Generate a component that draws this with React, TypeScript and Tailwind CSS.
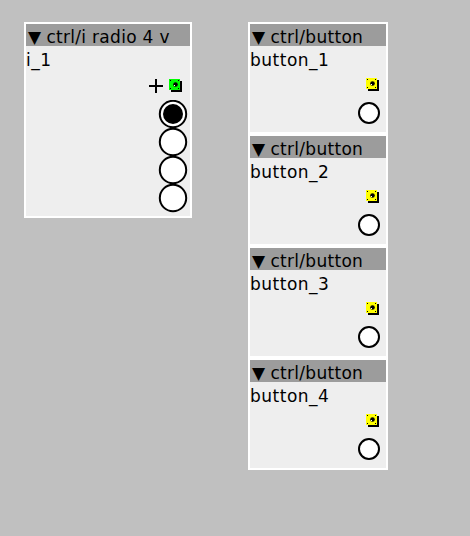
import React from "react";

const font = { fontFamily: '"DejaVu Sans", "Liberation Sans", sans-serif' };

const Inlet = ({ color }: { color: string }) => (
  <svg width="13" height="13" viewBox="0 0 13 13" className="block">
    <rect x="2" y="2" width="11" height="11" fill="#000" />
    <rect x="0" y="0" width="11" height="11" fill={color} />
    <rect x="1" y="1" width="1" height="1" fill="#000" />
    <rect x="9" y="1" width="1" height="1" fill="#000" />
    <rect x="1" y="9" width="1" height="1" fill="#000" />
    <rect x="9" y="9" width="1" height="1" fill="#000" />
    <circle cx="6.5" cy="5.5" r="2.3" fill="#000" />
    <rect x="5" y="6" width="1" height="1" fill="#fff" />
  </svg>
);

const Header = ({ title }: { title: string }) => (
  <div className="h-[22px] bg-[#9c9c9c] flex items-start pt-[4px] pl-[2px] text-[17px] leading-[18px] text-black tracking-[0.3px] whitespace-nowrap">
    <span className="text-[17px] leading-[18px] mr-[5px]">▼</span>
    <span>{title}</span>
  </div>
);

const Radio = () => (
  <svg width="30" height="114" viewBox="0 0 30 114" className="block">
    {[0, 1, 2, 3].map((i) => (
      <circle key={i} cx="15" cy={14 + i * 28} r="13.2" fill="#fff" stroke="#000" strokeWidth="2" />
    ))}
    <circle cx="15" cy="14" r="10" fill="#000" />
  </svg>
);

const ButtonBox = ({ name }: { name: string }) => (
  <div className="w-[140px] h-[112px] border-2 border-white bg-[#eeeeee] flex flex-col">
    <Header title="ctrl/button" />
    <div className="pt-[4px] h-[24px] leading-[20px] text-[17px] tracking-[0.5px] text-black">{name}</div>
    <div className="flex justify-end pr-[7px] mt-[8px]">
      <Inlet color="#ffff00" />
    </div>
    <div className="flex justify-end pr-[6px] mt-[11px]">
      <div className="w-[22px] h-[22px] rounded-full border-2 border-black bg-white" />
    </div>
  </div>
);

export default function App() {
  return (
    <div className="w-[470px] h-[536px] bg-[#c0c0c0] flex items-start pl-[24px] pt-[22px] gap-[56px]" style={font}>
      <div className="w-[168px] h-[196px] border-2 border-white bg-[#eeeeee] flex flex-col">
        <Header title="ctrl/i radio 4 v" />
        <div className="pt-[4px] h-[24px] leading-[20px] text-[17px] tracking-[0.5px] text-black">i_1</div>
        <div className="flex justify-end items-center pr-[8px] mt-[8px]">
          <svg width="14" height="14" viewBox="0 0 14 14" className="block mr-[6px] mt-[1px]">
            <rect x="0" y="6" width="14" height="2" fill="#000" />
            <rect x="6" y="0" width="2" height="14" fill="#000" />
          </svg>
          <Inlet color="#00ff00" />
        </div>
        <div className="flex justify-end pr-[2px] mt-[7px]">
          <Radio />
        </div>
      </div>
      <div className="flex flex-col">
        <ButtonBox name="button_1" />
        <ButtonBox name="button_2" />
        <ButtonBox name="button_3" />
        <ButtonBox name="button_4" />
      </div>
    </div>
  );
}
